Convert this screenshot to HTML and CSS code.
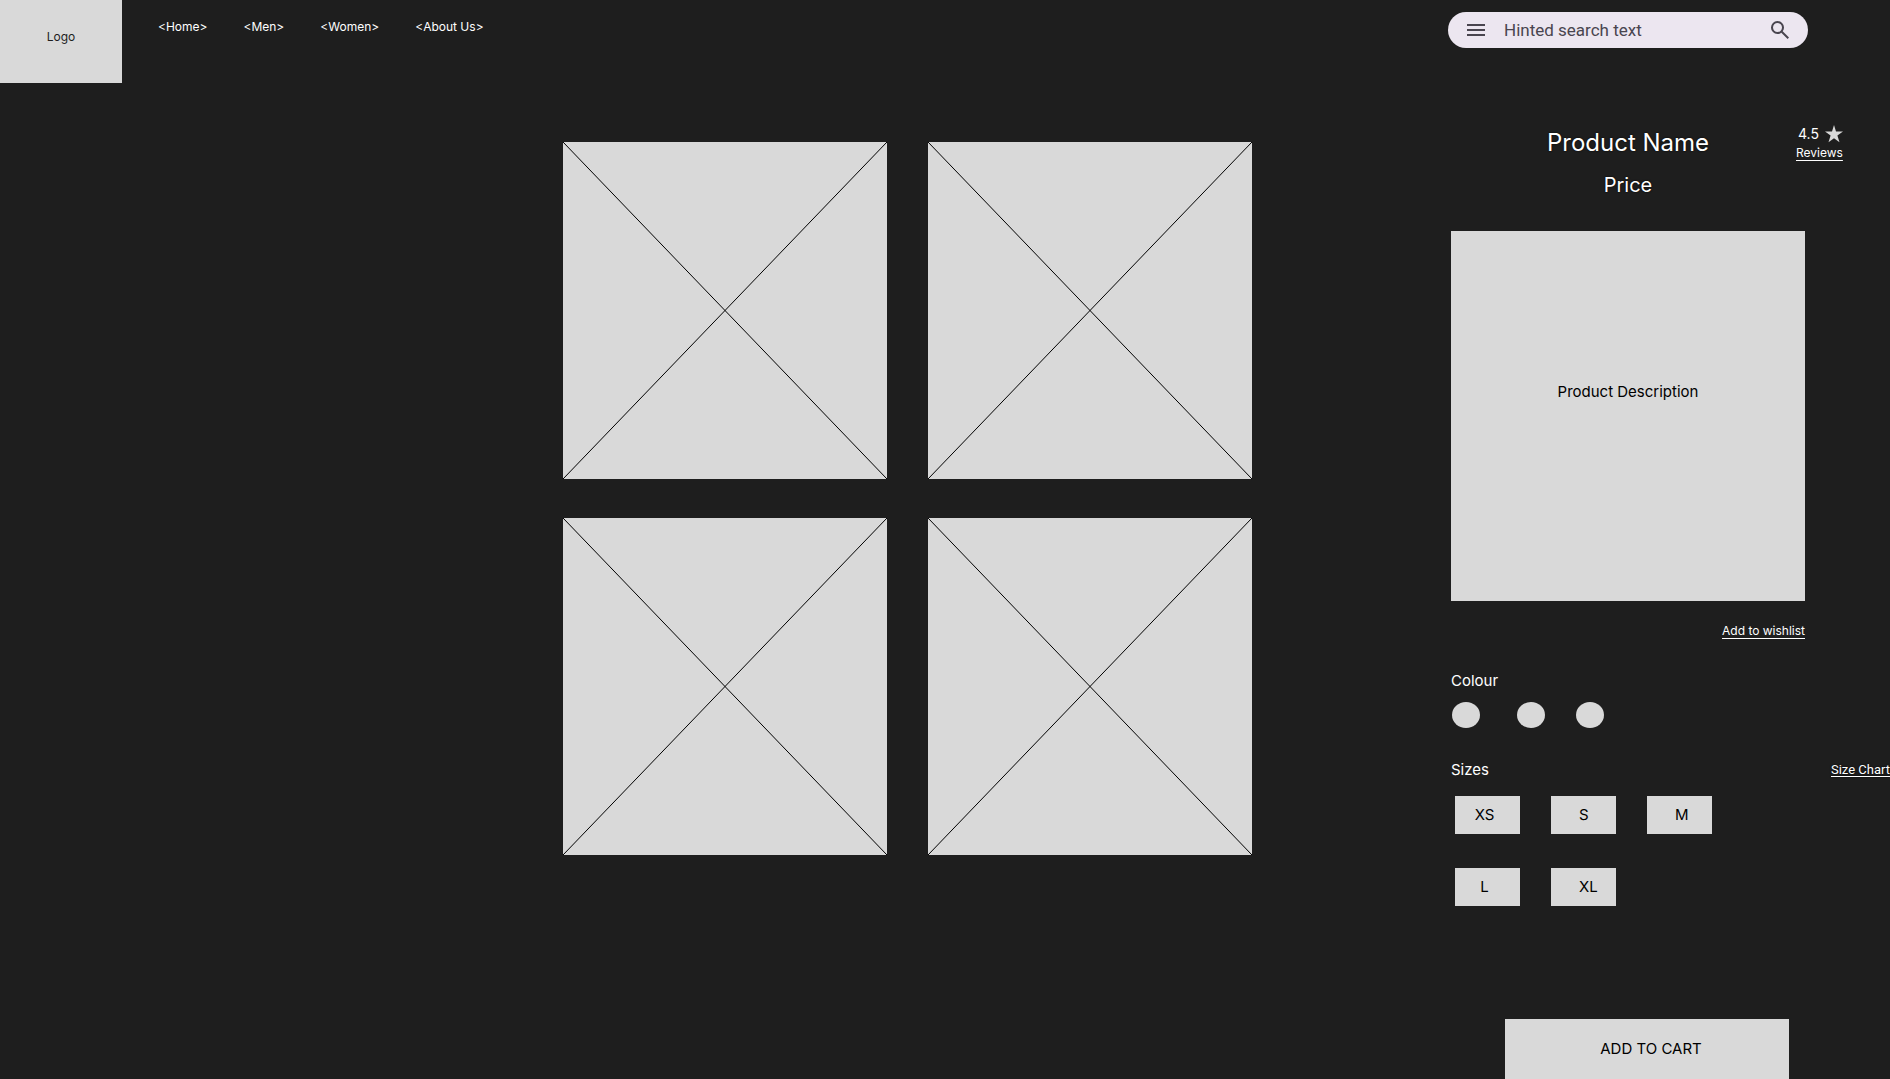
FILE: index.html
```html
<!DOCTYPE html>
<html lang="en">
<head>
<meta charset="utf-8">
<meta name="viewport" content="width=device-width, initial-scale=1">
<title>Product Name</title>
<link rel="stylesheet" href="styles.css">
</head>
<body>
<header class="header">
  <a class="logo" href="#">Logo</a>
  <nav class="nav">
    <a href="#">&lt;Home&gt;</a>
    <a href="#">&lt;Men&gt;</a>
    <a href="#">&lt;Women&gt;</a>
    <a href="#">&lt;About Us&gt;</a>
  </nav>
  <form class="search" role="search">
    <button class="icon-button" type="button" aria-label="Menu">
      <svg width="24" height="24" viewBox="0 0 24 24"><path fill="currentColor" d="M3 18v-2h18v2zm0-5v-2h18v2zm0-5V6h18v2z"/></svg>
    </button>
    <input class="search-input" type="search" aria-label="Search" placeholder="Hinted search text">
    <button class="icon-button" type="submit" aria-label="Search">
      <svg width="24" height="24" viewBox="0 0 24 24"><path fill="currentColor" d="m19.6 21-6.3-6.3A6.1 6.1 0 0 1 9.5 16a6.27 6.27 0 0 1-4.612-1.887A6.27 6.27 0 0 1 3 9.5q0-2.725 1.888-4.612A6.27 6.27 0 0 1 9.5 3q2.725 0 4.613 1.888A6.27 6.27 0 0 1 16 9.5a6.1 6.1 0 0 1-1.3 3.8l6.3 6.3zM9.5 14q1.875 0 3.188-1.312Q14 11.375 14 9.5t-1.312-3.187Q11.375 5 9.5 5T6.313 6.313Q5 7.625 5 9.5t1.313 3.188Q7.625 14 9.5 14"/></svg>
    </button>
  </form>
</header>
<main class="main">
  <section class="gallery" aria-label="Product images">
    <svg class="photo" viewBox="0 0 324 337" preserveAspectRatio="none"><path d="M0 0 324 337M324 0 0 337"/></svg>
    <svg class="photo" viewBox="0 0 324 337" preserveAspectRatio="none"><path d="M0 0 324 337M324 0 0 337"/></svg>
    <svg class="photo" viewBox="0 0 324 337" preserveAspectRatio="none"><path d="M0 0 324 337M324 0 0 337"/></svg>
    <svg class="photo" viewBox="0 0 324 337" preserveAspectRatio="none"><path d="M0 0 324 337M324 0 0 337"/></svg>
  </section>
  <section class="product">
    <div class="product-head">
      <div class="product-title">
        <h1 class="name">Product Name</h1>
        <p class="price">Price</p>
      </div>
      <div class="rating">
        <span class="score">4.5
          <svg width="18" height="18" viewBox="0 0 18 18" aria-hidden="true"><path fill="#d9d9d9" d="m9 0 2 6.600h7l-5.600 4 2.100 6.700L9 13.200l-5.500 4.100 2.100-6.700L0 6.600h7z"/></svg>
        </span>
        <a class="small-link" href="#">Reviews</a>
      </div>
    </div>
    <div class="description">Product Description</div>
    <div class="wishlist"><a class="small-link" href="#">Add to wishlist</a></div>
    <fieldset class="colours">
      <legend class="label">Colour</legend>
      <div class="swatches">
        <input class="swatch" type="radio" name="colour" aria-label="Colour 1">
        <input class="swatch" type="radio" name="colour" aria-label="Colour 2">
        <input class="swatch" type="radio" name="colour" aria-label="Colour 3">
      </div>
    </fieldset>
    <div class="sizes-head">
      <h2 class="label">Sizes</h2>
      <a class="small-link chart-link" href="#">Size Chart</a>
    </div>
    <div class="sizes">
      <button class="size size-first" type="button">XS</button>
      <button class="size" type="button">S</button>
      <button class="size" type="button">M</button>
      <button class="size size-first" type="button">L</button>
      <button class="size" type="button">XL</button>
    </div>
    <button class="cart" type="button">ADD TO CART</button>
  </section>
</main>
</body>
</html>
```
FILE: styles.css
```css
* {
  box-sizing: border-box;
}

body {
  margin: 0;
  background: #1e1e1e;
  color: #fff;
  font-family: Inter, "Liberation Sans", sans-serif;
  font-size: 12px;
  line-height: 16px;
}

a {
  color: inherit;
  text-decoration: none;
}

h1,
h2,
p {
  margin: 0;
  font-weight: inherit;
}

button,
input {
  font: inherit;
}

button {
  border: 0;
  cursor: pointer;
}

.header {
  display: flex;
  align-items: flex-start;
  padding-right: 82px;
}

.logo {
  display: flex;
  align-items: center;
  justify-content: center;
  width: 122px;
  height: 83px;
  padding-bottom: 10px;
  background: #d9d9d9;
  color: #1e1e1e;
}

.nav {
  display: flex;
  gap: 36px;
  padding: 19px 36px;
}

.search {
  display: flex;
  align-items: center;
  width: 360px;
  height: 36px;
  margin: 12px 0 0 auto;
  padding: 0 16px;
  border-radius: 18px;
  background: #ece6f0;
  color: #49454f;
}

.icon-button {
  display: flex;
  padding: 0;
  background: none;
  color: inherit;
}

.search-input {
  flex: 1;
  min-width: 0;
  padding: 0 16px;
  border: 0;
  outline: 0;
  background: none;
  color: inherit;
  font-family: Roboto, sans-serif;
  font-size: 17px;
  line-height: 24px;
}

.search-input::placeholder {
  color: inherit;
  opacity: 1;
}

.main {
  display: grid;
  grid-template-columns: 563fr 689fr 199fr 439px;
  align-items: start;
}

.gallery {
  grid-column: 2;
  display: grid;
  grid-template-columns: 1fr 1fr;
  gap: 39px 41px;
  padding-top: 59px;
}

.photo {
  display: block;
  width: 100%;
  aspect-ratio: 324 / 337;
  background: #d9d9d9;
  fill: none;
  stroke: #000;
}

.product {
  grid-column: 4;
  padding-top: 41px;
}

.product-head {
  display: flex;
}

.product-title {
  width: 345px;
  padding: 4px 0 0 9px;
  text-align: center;
  text-shadow: 0 0 2px #000;
}

.name {
  font-size: 24px;
  line-height: 30px;
}

.price {
  margin-top: 15px;
  font-size: 20px;
  line-height: 24px;
}

.rating {
  display: flex;
  flex-direction: column;
  align-items: flex-end;
  gap: 1px;
}

.score {
  display: flex;
  align-items: center;
  gap: 6px;
  font-size: 14px;
  line-height: 20px;
}

.small-link {
  text-decoration: underline;
  text-underline-offset: 3px;
}

.description {
  display: flex;
  align-items: center;
  justify-content: center;
  width: 354px;
  height: 370px;
  margin-top: 34px;
  padding-bottom: 48px;
  background: #d9d9d9;
  color: #000;
  font-size: 15px;
}

.wishlist {
  width: 354px;
  margin-top: 22px;
  text-align: right;
}

.colours {
  margin: 32px 0 0;
  padding: 0;
  border: 0;
}

.label {
  padding: 0;
  font-size: 15px;
  line-height: 20px;
}

.swatches {
  display: grid;
  grid-template-columns: 65px 59px 28px;
  padding: 11px 0 0 1px;
}

.swatch {
  appearance: none;
  width: 28px;
  height: 26px;
  margin: 0;
  border-radius: 50%;
  background: #d9d9d9;
}

.sizes-head {
  display: flex;
  align-items: center;
  justify-content: space-between;
  margin-top: 32px;
}

.chart-link {
  font-family: Roboto, sans-serif;
  font-size: 13px;
  text-shadow: 0 0 2px #000;
  text-underline-offset: 2px;
}

.sizes {
  display: grid;
  grid-template-columns: repeat(3, 65px);
  gap: 34px 31px;
  padding: 16px 0 0 4px;
}

.size {
  height: 38px;
  padding: 0 0 0 28px;
  background: #d9d9d9;
  color: #000;
  font-size: 15px;
  text-align: left;
}

.size-first {
  padding: 0 6px 0 0;
  text-align: center;
}

.cart {
  display: block;
  width: 284px;
  height: 60px;
  margin: 113px 0 0 54px;
  padding: 0 0 0 8px;
  background: #d9d9d9;
  color: #000;
  font-size: 15px;
}
```
